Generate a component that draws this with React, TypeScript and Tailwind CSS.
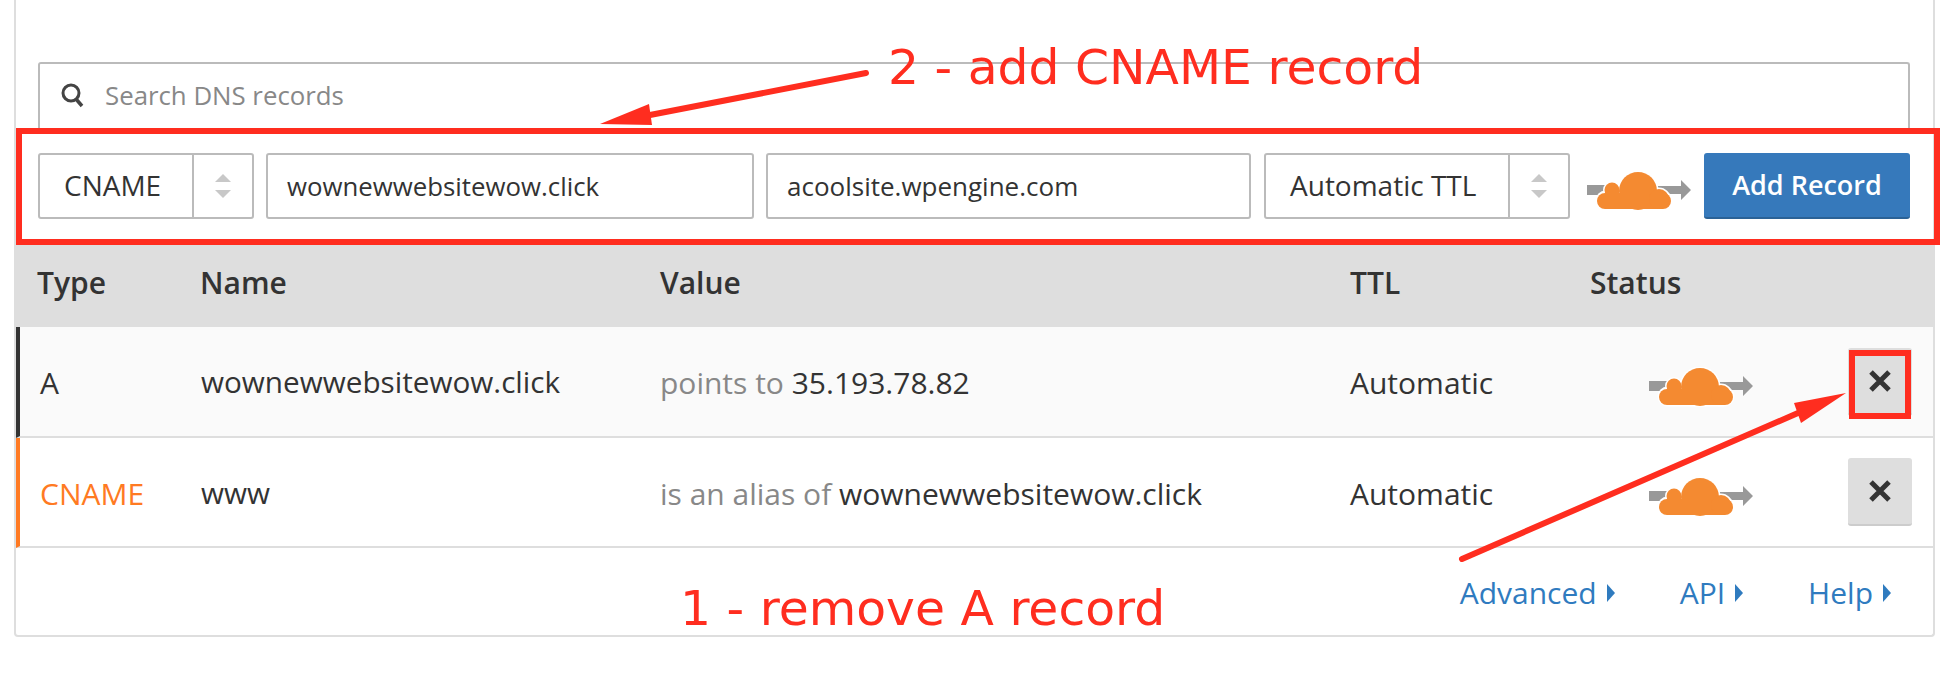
import React from "react";

function CloudIcon() {
  return (
    <svg width="104" height="40" viewBox="0 0 104 40" className="block">
      {/* arrow behind the cloud */}
      <rect x="0" y="14" width="30" height="10" fill="#999999" />
      <path d="M70 15h24V9l10 10-10 10v-6H70z" fill="#999999" />
      {/* white outline */}
      <g fill="#ffffff" stroke="#ffffff" strokeWidth="3">
        <circle cx="51" cy="20" r="19" />
        <circle cx="25" cy="19" r="7.5" />
        <rect x="10" y="21" width="74" height="17" rx="8.5" />
        <circle cx="72" cy="28" r="10" />
      </g>
      <g fill="#f48a31">
        <circle cx="51" cy="20" r="19" />
        <circle cx="25" cy="19" r="7.5" />
        <rect x="10" y="22" width="74" height="16" rx="8" />
        <circle cx="72" cy="28" r="10" />
      </g>
    </svg>
  );
}

function Stepper() {
  return (
    <svg width="16" height="24" viewBox="0 0 16 24">
      <path d="M8 0l8 8H0z" fill="#c8c8c8" />
      <path d="M0 16h16l-8 8z" fill="#c8c8c8" />
    </svg>
  );
}

function SelectBox({ label, className, textClass }: { label: string; className: string; textClass: string }) {
  return (
    <div className={`flex h-[66px] rounded-[3px] border-2 border-[#bbbbbb] bg-white ${className}`}>
      <div className={`flex flex-1 items-center pb-[2px] text-[28px] text-[#333333] ${textClass}`}>{label}</div>
      <div className="flex w-[60px] items-center justify-center border-l-2 border-[#bbbbbb]">
        <Stepper />
      </div>
    </div>
  );
}

function DeleteButton() {
  return (
    <button className="flex h-[68px] w-[64px] items-center justify-center rounded-[3px] border-b-2 border-[#cccccc] bg-[#dedede]">
      <svg width="24" height="24" viewBox="0 0 24 24">
        <path d="M3 3l18 18M21 3L3 21" stroke="#333333" strokeWidth="5" />
      </svg>
    </button>
  );
}

function FooterLink({ label }: { label: string }) {
  return (
    <a className="flex items-center gap-[10px] text-[30px] text-[#2f7bbf]">
      {label}
      <svg width="8" height="18" viewBox="0 0 8 18">
        <path d="M0 0l8 9-8 9z" fill="#2f7bbf" />
      </svg>
    </a>
  );
}

const rowGrid = "grid grid-cols-[181px_459px_690px_240px_1fr] items-center";

function RecordRow({
  type,
  name,
  prefix,
  value,
  rowClass,
  typeClass,
}: {
  type: string;
  name: string;
  prefix: string;
  value: string;
  rowClass: string;
  typeClass: string;
}) {
  return (
    <div className={`${rowGrid} border-b-2 border-l-4 border-b-[#dedede] text-[30px] text-[#333333] ${rowClass}`}>
      <div className={`pl-[20px] pt-[2px] ${typeClass}`}>{type}</div>
      <div className="pt-[2px] text-[29.7px]">{name}</div>
      <div className="pt-[2px]">
        <span className="text-[#888888]">{prefix}</span> {value}
      </div>
      <div className="pt-[2px]">Automatic</div>
      <div className="flex items-center justify-between pl-[59px] pr-[21px]">
        <div className="mt-[10px]">
          <CloudIcon />
        </div>
        <DeleteButton />
      </div>
    </div>
  );
}

export default function App() {
  return (
    <div className="relative h-[690px] w-[1946px] overflow-hidden bg-white font-['Open_Sans',sans-serif]">
      <div className="ml-[14px] h-[637px] w-[1921px] rounded-b-[4px] border-x-2 border-b-2 border-[#dedede]">
        {/* Search */}
        <div className="px-[22px] pt-[62px]">
          <div className="flex h-[66px] w-[1872px] items-center gap-[21px] rounded-t-[3px] border-x-2 border-t-2 border-[#bbbbbb] pb-[1px] pl-[21px]">
            <svg width="23" height="25" viewBox="0 0 23 25">
              <circle cx="10" cy="10" r="8" fill="none" stroke="#444444" strokeWidth="3" />
              <path d="M15 16l6 7" stroke="#444444" strokeWidth="3.5" />
            </svg>
            <span className="text-[25.8px] text-[#888888]">Search DNS records</span>
          </div>
        </div>

        {/* New record form */}
        <div className="flex h-[117px] items-start gap-[12px] pl-[22px] pt-[25px]">
          <SelectBox label="CNAME" className="w-[216px]" textClass="pl-[24px]" />
          <div className="flex h-[66px] w-[488px] items-center rounded-[3px] border-2 border-[#bbbbbb] pl-[19px] text-[25.8px] text-[#333333]">
            wownewwebsitewow.click
          </div>
          <div className="flex h-[66px] w-[485px] items-center rounded-[3px] border-2 border-[#bbbbbb] pl-[19px] text-[26px] text-[#333333]">
            acoolsite.wpengine.com
          </div>
          <SelectBox label="Automatic TTL" className="ml-[1px] w-[306px]" textClass="pl-[24px]" />
          <div className="ml-[5px] mt-[18px]">
            <CloudIcon />
          </div>
          <button className="ml-[1px] h-[66px] w-[206px] rounded-[3px] border-b-2 border-[#2b6296] bg-[#3679bb] text-[27px] font-semibold text-white">
            Add Record
          </button>
        </div>

        {/* Table */}
        <div className={`${rowGrid} h-[82px] bg-[#dedede] pb-[7px] text-[30px] font-semibold text-[#333333]`}>
          <div className="pl-[21px]">Type</div>
          <div className="pl-[3px]">Name</div>
          <div className="pl-[4px]">Value</div>
          <div className="pl-[4px]">TTL</div>
          <div className="pl-[4px]">Status</div>
        </div>
        <RecordRow
          type="A"
          name="wownewwebsitewow.click"
          prefix="points to"
          value="35.193.78.82"
          rowClass="h-[111px] border-l-[#333333] bg-[#fafafa]"
          typeClass=""
        />
        <RecordRow
          type="CNAME"
          name="www"
          prefix="is an alias of"
          value="wownewwebsitewow.click"
          rowClass="h-[110px] border-l-[#ff7a22] bg-white"
          typeClass="text-[#ff7a22]"
        />

        <div className="flex h-[85px] items-center justify-end gap-[65px] pr-[42px] pt-[4px]">
          <FooterLink label="Advanced" />
          <FooterLink label="API" />
          <FooterLink label="Help" />
        </div>
      </div>

      {/* Annotations drawn over the page */}
      <div className="absolute left-[16px] top-[128px] h-[117px] w-[1924px] border-[6px] border-[#ff2d1f]" />
      <div className="absolute left-[1849px] top-[350px] h-[69px] w-[62px] border-[6px] border-[#ff2d1f]" />
      <svg className="absolute left-0 top-0" width="1946" height="690" viewBox="0 0 1946 690">
        <path d="M866 73L650 115" stroke="#ff2d1f" strokeWidth="6" strokeLinecap="round" />
        <path d="M600 124L649 104L652 125z" fill="#ff2d1f" />
        <path d="M1462 559L1798 413" stroke="#ff2d1f" strokeWidth="6" strokeLinecap="round" />
        <path d="M1846 393L1794 403L1801 423z" fill="#ff2d1f" />
      </svg>
      <div className="absolute left-[888px] top-[38px] whitespace-nowrap font-['DejaVu_Sans',sans-serif] text-[48.8px] leading-[60px] text-[#ff2d1f]">
        2 - add CNAME record
      </div>
      <div className="absolute left-[680px] top-[579px] whitespace-nowrap font-['DejaVu_Sans',sans-serif] text-[48.8px] leading-[60px] text-[#ff2d1f]">
        1 - remove A record
      </div>
    </div>
  );
}
